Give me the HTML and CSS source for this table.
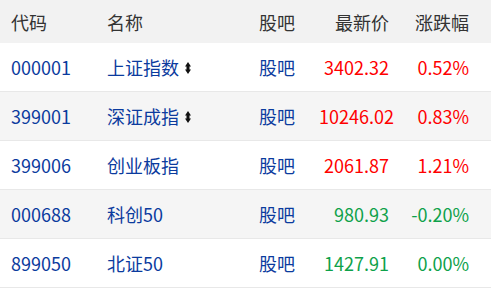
FILE: index.html
```html
<!DOCTYPE html>
<html lang="zh">
<head>
<meta charset="utf-8">
<link rel="stylesheet" href="styles.css">
</head>
<body>
<div class="table">
  <div class="row head">
    <span class="c-code">代码</span>
    <span class="c-name">名称</span>
    <span class="c-bar">股吧</span>
    <span class="c-price">最新价</span>
    <span class="c-pct">涨跌幅</span>
  </div>
  <div class="row">
    <span class="c-code link">000001</span>
    <span class="c-name link">上证指数<svg class="sort" width="6" height="12" viewBox="0 0 6 12"><path d="M3 0 L6 4.5 H4.5 V7.5 H6 L3 12 L0 7.5 H1.5 V4.5 H0 Z" fill="#111"/></svg></span>
    <span class="c-bar link">股吧</span>
    <span class="c-price up">3402.32</span>
    <span class="c-pct up">0.52%</span>
  </div>
  <div class="row alt">
    <span class="c-code link">399001</span>
    <span class="c-name link">深证成指<svg class="sort" width="6" height="12" viewBox="0 0 6 12"><path d="M3 0 L6 4.5 H4.5 V7.5 H6 L3 12 L0 7.5 H1.5 V4.5 H0 Z" fill="#111"/></svg></span>
    <span class="c-bar link">股吧</span>
    <span class="c-price up">10246.02</span>
    <span class="c-pct up">0.83%</span>
  </div>
  <div class="row">
    <span class="c-code link">399006</span>
    <span class="c-name link">创业板指</span>
    <span class="c-bar link">股吧</span>
    <span class="c-price up">2061.87</span>
    <span class="c-pct up">1.21%</span>
  </div>
  <div class="row alt">
    <span class="c-code link">000688</span>
    <span class="c-name link">科创50</span>
    <span class="c-bar link">股吧</span>
    <span class="c-price down">980.93</span>
    <span class="c-pct down">-0.20%</span>
  </div>
  <div class="row">
    <span class="c-code link">899050</span>
    <span class="c-name link">北证50</span>
    <span class="c-bar link">股吧</span>
    <span class="c-price down">1427.91</span>
    <span class="c-pct down">0.00%</span>
  </div>
</div>
</body>
</html>
```
FILE: styles.css
```css
html, body {
  margin: 0;
  padding: 0;
  background: #ffffff;
}
body {
  font-family: "Noto Sans CJK SC", "Microsoft YaHei", sans-serif;
  font-size: 18px;
  color: #333333;
}
.table {
  display: flex;
  flex-direction: column;
}
.row {
  display: grid;
  grid-template-columns: 96px 152px 60px 70px 80px;
  align-items: center;
  height: 48px;
  padding-left: 11px;
  border-bottom: 1px solid #e8e8e8;
  background: #ffffff;
  line-height: 24px;
  white-space: nowrap;
}
.row.head {
  height: 43px;
  background: #f2f2f2;
  border-bottom: none;
  color: #333333;
}
.row.alt {
  background: #f5f5f5;
}
.c-price, .c-pct {
  text-align: right;
}
.c-name {
  display: flex;
  align-items: center;
}
.link {
  color: #0b3b9e;
}
.up {
  color: #ff0000;
}
.down {
  color: #0ea14a;
}
.sort {
  margin-left: 6px;
  margin-top: 1px;
}
```
